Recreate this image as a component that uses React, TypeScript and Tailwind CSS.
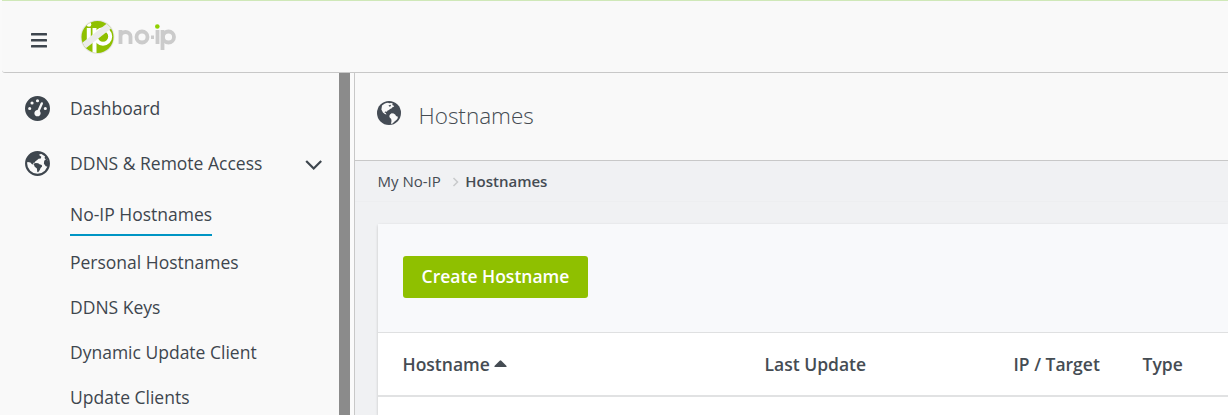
import type { ReactNode } from "react";
import { FaGaugeHigh } from "react-icons/fa6";

function Logo() {
  return (
    <svg className="mt-[17px] ml-[33px] block" width="98" height="38" viewBox="0 0 98 38">
      <defs>
        <clipPath id="disc">
          <circle cx="17.5" cy="19" r="16" />
        </clipPath>
      </defs>
      <circle cx="17.5" cy="19" r="17" fill="#e4e4e4" />
      <circle cx="17.5" cy="19" r="16" fill="#8fc000" />
      <g clipPath="url(#disc)">
        <g fill="none" stroke="#fff">
          <path d="M8.800 10v16" strokeWidth="4" />
          <path d="M14.500 10v28" strokeWidth="4" />
          <circle cx="23" cy="18.500" r="7.200" strokeWidth="4" />
        </g>
        <circle cx="9" cy="6.500" r="2.300" fill="#fff" />
        <path d="M-1 31.500L36 2.500" stroke="#ebebeb" strokeWidth="6.500" />
      </g>
      <g fill="none" stroke="#cbcbcb" strokeWidth="3.800">
        <path d="M40.500 26v-14M40.500 18.500c0-6 10-6 10 0v7.500M77.500 26v-14M82.500 32v-20" />
        <circle cx="62" cy="19" r="5.500" />
        <circle cx="88.500" cy="19" r="5.500" />
      </g>
      <rect x="71" y="17.500" width="3" height="3.500" fill="#cbcbcb" />
      <circle cx="77.300" cy="8.500" r="2.300" fill="#8fd000" />
    </svg>
  );
}

function OutlineGlobe() {
  return (
    <svg className="shrink-0" width="25" height="25" viewBox="0 0 25 25" fill="#3e464e">
      <circle cx="12.500" cy="12.500" r="11.400" fill="#f9f9f9" stroke="#3e464e" strokeWidth="2.100" />
      <path d="M1.200 11C1.800 6 6.500 1.300 12.500 1.100l3.800.5-1 1.700-1.500.5 2.500 2-.5 1.800-2.200.2-1.700 1.400-1.500 1-.5 1.400-1.800.3.400 1.600-1.500-.3-1.600-1.800-2.500-.4z" />
      <path d="M8.600 12.800l2-.9 2.600.4 1.300 1 2.300.6.300 1.600-1.500 1.500-.8 2-1.700 2.300-.8-.3-.4-3.500-2.200-1.700z" />
      <path d="M24 12.500l-1.200 3.300-2-.5-1.900-2.500.3-3 1.600-1.400L19.500 7l.8-2.200z" />
    </svg>
  );
}

function Globe() {
  return (
    <svg className="mt-[28px] shrink-0" width="24" height="24" viewBox="0 0 24 24">
      <circle cx="12" cy="12" r="12" fill="#454c55" />
      <g fill="#f9f9f9">
        <path d="M5 4.600C6.800 2.800 9 1.900 11 1.700l1.200.6 2-.4 1.600.6-.6 1.500 1.300.4.700 1.200-1.700.6-1.100 1.200-1.500.5-.8 1.200-1.500.4-.7 1.300-1.500-.4-1 .9 1.300.7.8 1.500-1.700-.6-1.900-1.300L4.400 8.500z" />
        <path d="M13 13.400l1.600-1.200 2.100.4 1.700 1.200.6 1.200 1.900.7-.3 1.900-1.200 1.400-1.600 1.200-1.500 1.500-1.400 1.300-.9-.4.500-2.500-.3-2-1.500-1.500-.4-1.600z" />
      </g>
      <path d="M11.500 4.500l2-.8.500 1.300-1.500.8z" fill="#454c55" />
    </svg>
  );
}

function SubItem({ children }: { children: ReactNode }) {
  return <a className="block h-[45px] leading-[45px] whitespace-nowrap">{children}</a>;
}

export default function App() {
  return (
    <div className="flex h-[415px] w-full flex-col overflow-hidden bg-[#fafafa] font-['Open_Sans',sans-serif] text-[#454c53]">
      <header className="ml-[2px] flex h-[73px] shrink-0 rounded-bl-[3px] border-t border-b border-t-[#cfe8b8] border-b-[#c8c8c8] bg-[#f9f9f9]">
        <svg className="mt-[32px] ml-[29px]" width="16" height="15" viewBox="0 0 16 15" fill="#3e464e">
          <rect width="16" height="2.500" rx=".5" />
          <rect y="6" width="16" height="2.500" rx=".5" />
          <rect y="12" width="16" height="2.500" rx=".5" />
        </svg>
        <Logo />
      </header>
      <div className="flex min-h-0 flex-1">
        <nav className="w-[339px] shrink-0 overflow-hidden bg-[#f9f9f9] text-[17.500px] text-[#3e464e]">
          <a className="mt-[17px] flex h-[36px] items-center pl-[25px]">
            <FaGaugeHigh size={25} />
            <span className="ml-[20px]">Dashboard</span>
          </a>
          <a className="mt-[19px] flex h-[36px] items-center pl-[25px]">
            <OutlineGlobe />
            <span className="ml-[20px] w-[235px] whitespace-nowrap">DDNS &amp; Remote Access</span>
            <svg className="mt-[3px]" width="18" height="12" viewBox="0 0 18 12" fill="none" stroke="#3e464e" strokeWidth="2.200">
              <path d="M1.200 2l7.500 7.500L16.200 2" />
            </svg>
          </a>
          <div className="mt-[17px] pl-[70px]">
            <a className="mb-[4px] inline-block h-[38px] border-b-2 border-[#0095c4] leading-[33px]">No-IP Hostnames</a>
            <SubItem>Personal Hostnames</SubItem>
            <SubItem>DDNS Keys</SubItem>
            <SubItem>Dynamic Update Client</SubItem>
            <SubItem>Update Clients</SubItem>
          </div>
        </nav>
        <div className="w-[11px] shrink-0 bg-[#8b8b8b]" />
        <main className="ml-[4px] flex min-w-0 flex-1 flex-col border-l border-[#c8c8c8] bg-[#f0f1f3]">
          <div className="flex h-[88px] shrink-0 border-b border-[#c8c8c8] bg-[#f9f9f9] pl-[22px]">
            <Globe />
            <h1 className="ml-[17.500px] text-[22.500px] leading-[86px] font-light">Hostnames</h1>
          </div>
          <div className="flex h-[41px] shrink-0 items-center border-b border-[#edeef0] pl-[22.500px] text-[15px]">
            <span>My No-IP</span>
            <svg className="mt-[2px] ml-[11px]" width="7" height="10" viewBox="0 0 7 10" fill="none" stroke="#c8cacc" strokeWidth="1.500">
              <path d="M1.500 1l4 4-4 4" />
            </svg>
            <span className="ml-[6.500px] font-semibold">Hostnames</span>
          </div>
          <section className="mt-[22px] ml-[23px] min-h-0 flex-1 rounded-tl-[2px] bg-white shadow-[0_1px_3px_rgba(0,0,0,0.2)]">
            <div className="h-[109px] border-b border-[#dfe0e1] bg-[#f8f9fb] pt-[32px] pl-[25px]">
              <button className="h-[42px] w-[185px] rounded-[3px] bg-[#8fc000] pb-[2px] text-[17.500px] font-semibold text-white">Create Hostname</button>
            </div>
            <div className="grid h-[64px] grid-cols-[362px_249px_129px_1fr] items-center border-b-2 border-[#e1e2e3] pl-[24.500px] text-[17.500px] font-semibold">
              <span className="flex items-center gap-[4px]">
                Hostname
                <svg className="mb-[2px]" width="13" height="7" viewBox="0 0 13 7" fill="currentColor">
                  <path d="M.7 7Q0 6.500.7 5.700L5.700.7q.8-.7 1.600 0l5 5q.7.800 0 1.300z" />
                </svg>
              </span>
              <span>Last Update</span>
              <span>IP / Target</span>
              <span>Type</span>
            </div>
          </section>
        </main>
      </div>
    </div>
  );
}
